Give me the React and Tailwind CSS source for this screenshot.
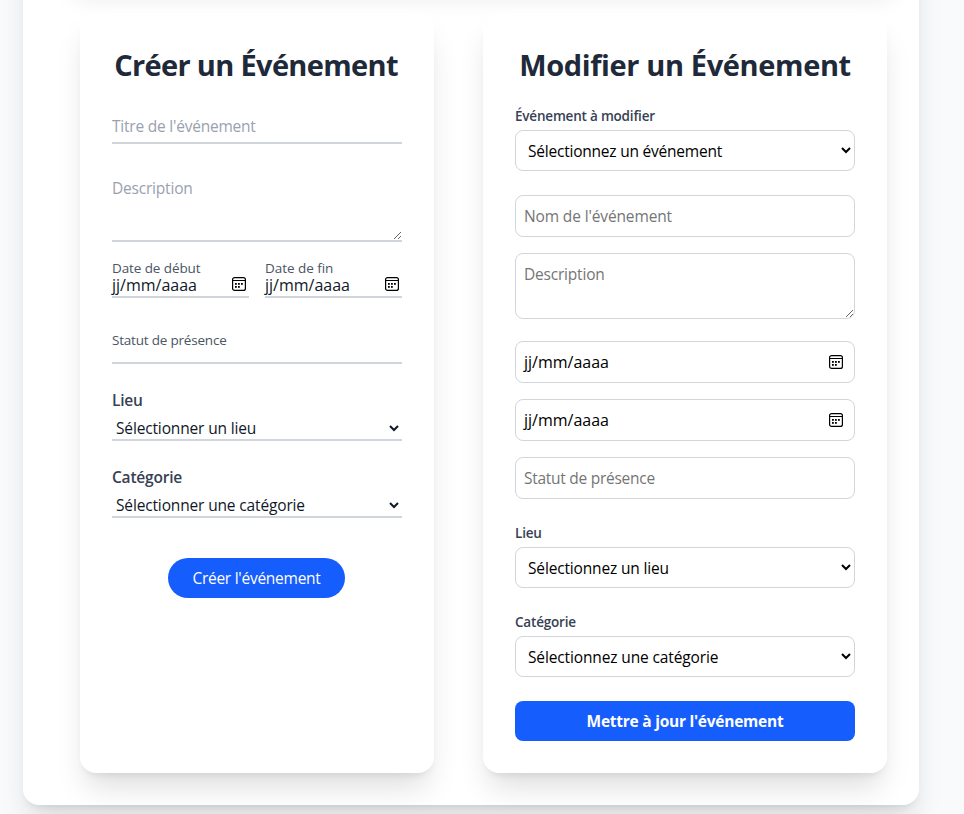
const lineField =
  "block w-full border-0 border-b-2 border-gray-300 bg-transparent p-0 text-[15.5px] text-gray-900 outline-none placeholder:text-gray-400 placeholder:opacity-100";
const boxField =
  "block w-full rounded-lg border border-gray-300 bg-transparent p-2 text-[15.5px] text-black outline-none placeholder:text-[#757575] placeholder:opacity-100";
const softShadow = "shadow-[0_20px_30px_-6px_rgba(0,0,0,0.13),0_6px_8px_-5px_rgba(0,0,0,0.1)]";

function CalendarIcon() {
  return (
    <svg width="14" height="14" viewBox="0 0 14 14" className="block shrink-0" fill="none">
      <rect x="0.6" y="0.6" width="12.8" height="12.8" rx="2" stroke="currentColor" strokeWidth="1.2" />
      <path d="M1 3.5h12" stroke="currentColor" />
      <g fill="currentColor">
        <rect x="3" y="6" width="1.8" height="1.8" />
        <rect x="6" y="6" width="1.8" height="1.8" />
        <rect x="9" y="6" width="1.8" height="1.8" />
        <rect x="3" y="9" width="1.8" height="1.8" />
        <rect x="6" y="9" width="1.8" height="1.8" />
      </g>
    </svg>
  );
}

function Card({ className, children }) {
  return (
    <section className={`h-[760px] rounded-2xl bg-white p-8 ${softShadow} ${className}`}>{children}</section>
  );
}

function LineDate({ label, tracking }) {
  return (
    <div className="flex-1">
      <div className={`h-[17px] text-[13.5px] leading-[17px] text-gray-600 ${tracking}`}>{label}</div>
      <div className="flex h-[21px] items-start justify-between border-b-2 border-gray-300 pr-[3px] text-base text-gray-900">
        <span className="leading-[17px]">jj/mm/aaaa</span>
        <span className="text-black"><CalendarIcon /></span>
      </div>
    </div>
  );
}

function BoxDate({ className }) {
  return (
    <div className={`flex h-[42px] items-center justify-between rounded-lg border border-gray-300 pr-[11px] pl-2 text-base text-black ${className}`}>
      <span>jj/mm/aaaa</span>
      <CalendarIcon />
    </div>
  );
}

function LineSelect({ label, option, className }) {
  return (
    <div className={className}>
      <label className="block h-6 text-[15.5px] leading-6 font-semibold tracking-[-0.2px] text-gray-700">{label}</label>
      <select className={`${lineField} mt-1 h-[25px] tracking-[-0.15px]`}>
        <option>{option}</option>
      </select>
    </div>
  );
}

function BoxSelect({ label, option, tracking, className }) {
  return (
    <div className={className}>
      <label className="block h-5 text-[13.5px] leading-5 font-semibold tracking-[-0.2px] text-gray-700">{label}</label>
      <select className={`${boxField} mt-1 h-[41px] ${tracking}`}>
        <option>{option}</option>
      </select>
    </div>
  );
}

export default function App() {
  return (
    <div className="h-[814px] overflow-hidden bg-[#f8fafc] pl-[23px] font-['Open_Sans','Noto_Sans',sans-serif]">
      <main className={`-mt-[120px] h-[925px] w-[896px] rounded-2xl bg-white pt-[21px] pl-[57px] ${softShadow}`}>
        <div className="-ml-3 h-20 w-[831px] rounded-2xl bg-white shadow-xl" />
        <div className="mt-8 flex w-[807px] items-start justify-between">
          <Card className="w-[354px]">
            <h2 className="-mr-1 -ml-1.5 h-9 pt-0.5 text-center text-[29px] leading-9 font-bold tracking-[-0.66px] whitespace-nowrap text-gray-800">
              Créer un Événement
            </h2>
            <input className={`${lineField} mt-6 h-[39px] pt-1 tracking-[-0.22px]`} placeholder="Titre de l'événement" />
            <textarea
              className={`${lineField} mt-8 h-[66px] resize-y leading-6 tracking-[-0.2px]`}
              placeholder="Description"
            />
            <div className="mt-[18px] flex gap-4">
              <LineDate label="Date de début" tracking="tracking-[-0.1px]" />
              <LineDate label="Date de fin" tracking="tracking-[-0.05px]" />
            </div>
            <div className="mt-8 h-[34px] border-b-2 border-gray-300 text-[13.5px] leading-5 tracking-[-0.2px] text-gray-600">
              Statut de présence
            </div>
            <LineSelect className="mt-6" label="Lieu" option="Sélectionner un lieu" />
            <LineSelect className="mt-6" label="Catégorie" option="Sélectionner une catégorie" />
            <button className="mt-10 ml-14 block h-10 w-[177px] rounded-full bg-[#155dfc] pt-0.5 text-[15.5px] tracking-[-0.26px] text-white">
              Créer l'événement
            </button>
          </Card>

          <Card className="w-[404px]">
            <h2 className="h-9 pt-0.5 text-center text-[29px] leading-9 font-bold tracking-[-0.37px] whitespace-nowrap text-gray-800">
              Modifier un Événement
            </h2>
            <BoxSelect className="mt-[25px]" label="Événement à modifier" option="Sélectionnez un événement" tracking="tracking-[-0.22px]" />
            <input className={`${boxField} mt-6 h-[42px] tracking-[-0.13px]`} placeholder="Nom de l'événement" />
            <textarea
              className={`${boxField} mt-4 h-[66px] resize-y leading-6 tracking-[-0.2px]`}
              placeholder="Description"
            />
            <BoxDate className="mt-[22px]" />
            <BoxDate className="mt-4" />
            <input className={`${boxField} mt-4 h-[42px] tracking-[-0.27px]`} placeholder="Statut de présence" />
            <BoxSelect className="mt-6" label="Lieu" option="Sélectionnez un lieu" tracking="tracking-[-0.16px]" />
            <BoxSelect className="mt-6" label="Catégorie" option="Sélectionnez une catégorie" tracking="tracking-[-0.13px]" />
            <button className="mt-6 block h-10 w-full rounded-lg bg-[#155dfc] pt-0.5 text-[15.5px] font-bold tracking-[-0.25px] text-white">
              Mettre à jour l'événement
            </button>
          </Card>
        </div>
      </main>
    </div>
  );
}
